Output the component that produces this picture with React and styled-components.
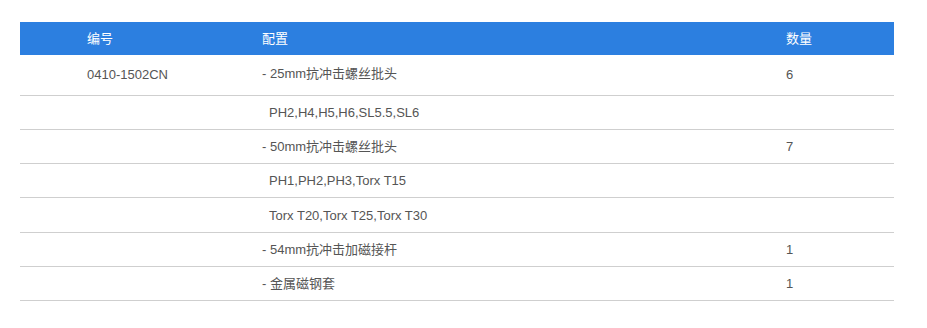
import React from "react";
import styled, { createGlobalStyle } from "styled-components";

const GlobalStyle = createGlobalStyle`
  body {
    margin: 0;
    background: #fff;
    font-family: "Liberation Sans", Arial, "Noto Sans CJK SC", sans-serif;
  }
`;

const Page = styled.div`
  padding: 22px 33px 0 20px;
`;

const Table = styled.table`
  width: 874px;
  border-collapse: collapse;
  table-layout: fixed;
  font-size: 13px;
  color: #555;
`;

const HeadRow = styled.tr`
  background: #2c7fe0;
  height: 33px;
`;

const Th = styled.th`
  box-sizing: border-box;
  color: #fff;
  font-weight: normal;
  text-align: left;
  padding: 0 0 2px ${(p) => p.$pad || 0}px;
  width: ${(p) => p.$w}px;
`;

const Row = styled.tr`
  height: ${(p) => (p.$tall ? "40px" : "34.3px")};
  border-bottom: 1px solid #cfcfcf;
`;

const Td = styled.td`
  box-sizing: border-box;
  padding: 0 0 ${(p) => p.$lift || 0}px ${(p) => p.$pad || 0}px;
  vertical-align: middle;
`;

const rows = [
  { code: "0410-1502CN", item: "- 25mm抗冲击螺丝批头", qty: "6", tall: true },
  { item: "PH2,H4,H5,H6,SL5.5,SL6", sub: true },
  { item: "- 50mm抗冲击螺丝批头", qty: "7" },
  { item: "PH1,PH2,PH3,Torx T15", sub: true },
  { item: "Torx T20,Torx T25,Torx T30", sub: true },
  { item: "- 54mm抗冲击加磁接杆", qty: "1" },
  { item: "- 金属磁钢套", qty: "1" },
];

export default function App() {
  return (
    <Page>
      <GlobalStyle />
      <Table>
        <thead>
          <HeadRow>
            <Th $w={242} $pad={67}>编号</Th>
            <Th $w={524}>配置</Th>
            <Th $w={108}>数量</Th>
          </HeadRow>
        </thead>
        <tbody>
          {rows.map((r, i) => (
            <Row key={i} $tall={r.tall}>
              <Td $pad={67}>{r.code || ""}</Td>
              <Td $pad={r.sub ? 7 : 0} $lift={r.sub ? 0 : r.tall ? 5 : 2}>
                {r.item}
              </Td>
              <Td>{r.qty || ""}</Td>
            </Row>
          ))}
        </tbody>
      </Table>
    </Page>
  );
}
